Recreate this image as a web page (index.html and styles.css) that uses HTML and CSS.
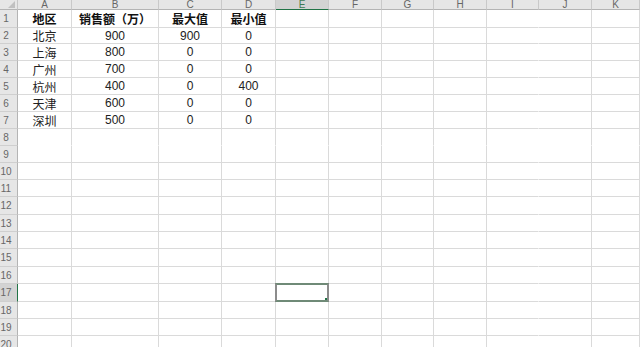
FILE: index.html
```html
<!DOCTYPE html>
<html lang="zh">
<head>
<meta charset="utf-8">
<link rel="stylesheet" href="styles.css">
</head>
<body>
<div class="sheet">
  <div class="corner"><span class="tri"></span></div>
  <div class="ch">A</div><div class="ch">B</div><div class="ch">C</div><div class="ch">D</div><div class="ch sel">E</div><div class="ch">F</div><div class="ch">G</div><div class="ch">H</div><div class="ch nr">I</div><div class="ch">J</div><div class="ch">K</div>

  <div class="rh">1</div><div class="c b">地区</div><div class="c b">销售额（万）</div><div class="c b">最大值</div><div class="c b">最小值</div><div class="c"></div><div class="c"></div><div class="c"></div><div class="c"></div><div class="c nr"></div><div class="c"></div><div class="c"></div>
  <div class="rh">2</div><div class="c">北京</div><div class="c">900</div><div class="c">900</div><div class="c">0</div><div class="c"></div><div class="c"></div><div class="c"></div><div class="c"></div><div class="c nr"></div><div class="c"></div><div class="c"></div>
  <div class="rh">3</div><div class="c">上海</div><div class="c">800</div><div class="c">0</div><div class="c">0</div><div class="c"></div><div class="c"></div><div class="c"></div><div class="c"></div><div class="c nr"></div><div class="c"></div><div class="c"></div>
  <div class="rh">4</div><div class="c">广州</div><div class="c">700</div><div class="c">0</div><div class="c">0</div><div class="c"></div><div class="c"></div><div class="c"></div><div class="c"></div><div class="c nr"></div><div class="c"></div><div class="c"></div>
  <div class="rh">5</div><div class="c">杭州</div><div class="c">400</div><div class="c">0</div><div class="c">400</div><div class="c"></div><div class="c"></div><div class="c"></div><div class="c"></div><div class="c nr"></div><div class="c"></div><div class="c"></div>
  <div class="rh">6</div><div class="c">天津</div><div class="c">600</div><div class="c">0</div><div class="c">0</div><div class="c"></div><div class="c"></div><div class="c"></div><div class="c"></div><div class="c nr"></div><div class="c"></div><div class="c"></div>
  <div class="rh">7</div><div class="c">深圳</div><div class="c">500</div><div class="c">0</div><div class="c">0</div><div class="c"></div><div class="c"></div><div class="c"></div><div class="c"></div><div class="c nr"></div><div class="c"></div><div class="c"></div>
  <div class="rh">8</div><div class="c nb"></div><div class="c nb"></div><div class="c nb"></div><div class="c nb"></div><div class="c nb"></div><div class="c nb"></div><div class="c nb"></div><div class="c nb"></div><div class="c nb nr"></div><div class="c nb"></div><div class="c nb"></div>
  <div class="rh">9</div><div class="c"></div><div class="c"></div><div class="c"></div><div class="c"></div><div class="c"></div><div class="c"></div><div class="c"></div><div class="c"></div><div class="c nr"></div><div class="c"></div><div class="c"></div>
  <div class="rh">10</div><div class="c"></div><div class="c"></div><div class="c"></div><div class="c"></div><div class="c"></div><div class="c"></div><div class="c"></div><div class="c"></div><div class="c nr"></div><div class="c"></div><div class="c"></div>
  <div class="rh">11</div><div class="c"></div><div class="c"></div><div class="c"></div><div class="c"></div><div class="c"></div><div class="c"></div><div class="c"></div><div class="c"></div><div class="c nr"></div><div class="c"></div><div class="c"></div>
  <div class="rh">12</div><div class="c"></div><div class="c"></div><div class="c"></div><div class="c"></div><div class="c"></div><div class="c"></div><div class="c"></div><div class="c"></div><div class="c nr"></div><div class="c"></div><div class="c"></div>
  <div class="rh">13</div><div class="c"></div><div class="c"></div><div class="c"></div><div class="c"></div><div class="c"></div><div class="c"></div><div class="c"></div><div class="c"></div><div class="c nr"></div><div class="c"></div><div class="c"></div>
  <div class="rh">14</div><div class="c"></div><div class="c"></div><div class="c"></div><div class="c"></div><div class="c"></div><div class="c"></div><div class="c"></div><div class="c"></div><div class="c nr"></div><div class="c"></div><div class="c"></div>
  <div class="rh">15</div><div class="c"></div><div class="c"></div><div class="c"></div><div class="c"></div><div class="c"></div><div class="c"></div><div class="c"></div><div class="c"></div><div class="c nr"></div><div class="c"></div><div class="c"></div>
  <div class="rh">16</div><div class="c"></div><div class="c"></div><div class="c"></div><div class="c"></div><div class="c"></div><div class="c"></div><div class="c"></div><div class="c"></div><div class="c nr"></div><div class="c"></div><div class="c"></div>
  <div class="rh sel">17</div><div class="c"></div><div class="c"></div><div class="c"></div><div class="c"></div><div class="c active"><span class="handle"></span></div><div class="c"></div><div class="c"></div><div class="c"></div><div class="c nr"></div><div class="c"></div><div class="c"></div>
  <div class="rh">18</div><div class="c"></div><div class="c"></div><div class="c"></div><div class="c"></div><div class="c"></div><div class="c"></div><div class="c"></div><div class="c"></div><div class="c nr"></div><div class="c"></div><div class="c"></div>
  <div class="rh">19</div><div class="c"></div><div class="c"></div><div class="c"></div><div class="c"></div><div class="c"></div><div class="c"></div><div class="c"></div><div class="c"></div><div class="c nr"></div><div class="c"></div><div class="c"></div>
  <div class="rh">20</div><div class="c"></div><div class="c"></div><div class="c"></div><div class="c"></div><div class="c"></div><div class="c"></div><div class="c"></div><div class="c"></div><div class="c nr"></div><div class="c"></div><div class="c"></div>
</div>
</body>
</html>
```

FILE: styles.css
```css
html, body {
  margin: 0;
  padding: 0;
  background: #ffffff;
  overflow: hidden;
}

.sheet {
  display: grid;
  grid-template-columns: 18px 54px 87px 63px 54px 53px 53px 52px 53px 52px 53px 1fr;
  grid-template-rows: 10px 18px 16px 17px 17px 17px 17px 17px 17px 17px 17px 17px 18px 17px 17px 18px 17px 18px 17px 17px 17px;
  width: 640px;
  height: 347px;
  font-family: "Liberation Sans", "Noto Sans CJK SC", sans-serif;
  font-size: 12px;
  color: #222;
}

.sheet > div {
  box-sizing: border-box;
  overflow: hidden;
  white-space: nowrap;
}

.corner {
  position: relative;
  background: #e6e6e6;
  border-right: 1px solid #c6c6c6;
  border-bottom: 1px solid #b4b4b4;
}

.tri {
  position: absolute;
  right: 2px;
  bottom: 1px;
  width: 0;
  height: 0;
  border-left: 7px solid transparent;
  border-bottom: 7px solid #c0c0c0;
}

.ch {
  background: #e6e6e6;
  border-right: 1px solid #c9c9c9;
  border-bottom: 1px solid #b4b4b4;
  color: #666;
  font-size: 10px;
  line-height: 9px;
  text-align: center;
}

.ch.sel {
  background: #d3d3d3;
  border-bottom: 1px solid #217346;
  color: #3d7a54;
}

.rh {
  background: #e6e6e6;
  border-right: 1px solid #b4b4b4;
  border-bottom: 1px solid #cfcfcf;
  color: #666;
  font-size: 10px;
  padding-right: 5px;
  text-align: center;
  display: flex;
  align-items: center;
  justify-content: center;
}

.rh.sel {
  background: #d3d3d3;
  border-right: 1px solid #217346;
}

.c {
  border-right: 1px solid #dadada;
  border-bottom: 1px solid #dadada;
  display: flex;
  align-items: center;
  justify-content: center;
}

.c.b {
  font-weight: bold;
  color: #111;
}

.c.nb {
  border-bottom-color: transparent;
}

.c.nr {
  border-right-color: transparent;
}

.c.active {
  position: relative;
  border: 2px solid #6f8a77;
  margin: -1px 0 0 -1px;
  border-right-color: #8c8c8c;
  border-left-color: #8c8c8c;
}

.handle {
  position: absolute;
  right: -3px;
  bottom: -3px;
  width: 4px;
  height: 4px;
  background: #217346;
  border: 1px solid #fff;
}
```
